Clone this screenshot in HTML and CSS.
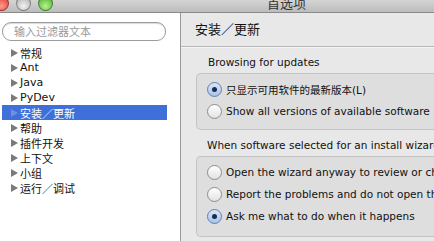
FILE: index.html
```html
<!DOCTYPE html>
<html lang="zh-CN">
<head>
    <meta charset="UTF-8">
    <title>首选项</title>
    <link rel="stylesheet" href="styles.css">
</head>
<body>
    <div class="window">
        <div class="titlebar">
            <div class="lights">
                <span class="light red"></span>
                <span class="light gray"></span>
                <span class="light green"></span>
            </div>
            <div class="title">首选项</div>
        </div>

        <div class="content">
            <div class="sidebar">
                <div class="search">输入过滤器文本</div>
                <ul class="tree">
                    <li><span class="arrow"></span>常规</li>
                    <li><span class="arrow"></span>Ant</li>
                    <li><span class="arrow"></span>Java</li>
                    <li><span class="arrow"></span>PyDev</li>
                    <li class="selected"><span class="arrow"></span>安装／更新</li>
                    <li><span class="arrow"></span>帮助</li>
                    <li><span class="arrow"></span>插件开发</li>
                    <li><span class="arrow"></span>上下文</li>
                    <li><span class="arrow"></span>小组</li>
                    <li><span class="arrow"></span>运行／调试</li>
                </ul>
            </div>

            <div class="main">
                <div class="page-header">安装／更新</div>

                <div class="group">
                    <div class="group-label">Browsing for updates</div>
                    <div class="group-box">
                        <div class="option"><span class="radio checked"></span>只显示可用软件的最新版本(L)</div>
                        <div class="option"><span class="radio"></span>Show all versions of available software</div>
                    </div>
                </div>

                <div class="group second">
                    <div class="group-label">When software selected for an install wizard may not be valid</div>
                    <div class="group-box">
                        <div class="option"><span class="radio"></span>Open the wizard anyway to review or change the selections</div>
                        <div class="option"><span class="radio"></span>Report the problems and do not open the wizard</div>
                        <div class="option"><span class="radio checked"></span>Ask me what to do when it happens</div>
                    </div>
                </div>
            </div>
        </div>
    </div>
</body>
</html>
```

FILE: styles.css
```css
body {
    margin: 0;
    font-family: "DejaVu Sans", "Noto Sans CJK SC", sans-serif;
    font-size: 10.5px;
    color: #111;
    background: #e8e8e8;
}
.window {
    width: 434px;
    height: 241px;
    overflow: hidden;
    display: flex;
    flex-direction: column;
}
.titlebar {
    height: 12px;
    flex-shrink: 0;
    display: flex;
    background: linear-gradient(#d4d4d4, #bcbcbc);
    border-bottom: 1px solid #8a8a8a;
    overflow: hidden;
}
.lights {
    display: flex;
    gap: 7px;
    margin-top: -4px;
    margin-left: -6px;
}
.light {
    width: 13px;
    height: 13px;
    border-radius: 50%;
    border: 1px solid rgba(0,0,0,0.35);
}
.red { background: radial-gradient(circle at 50% 70%, #ff9a8a, #d8322a); }
.gray { background: radial-gradient(circle at 50% 70%, #f2f2f2, #a8a8a8); }
.green { background: radial-gradient(circle at 50% 70%, #b6f28a, #43a92b); }
.title {
    margin-left: 214px;
    margin-top: -4px;
    font-family: "Noto Sans CJK SC", sans-serif;
    font-size: 13px;
    color: #333;
    line-height: 14px;
}
.content {
    flex: 1;
    display: flex;
    min-height: 0;
}
.sidebar {
    width: 180px;
    flex-shrink: 0;
    background: #fff;
    border-right: 1px solid #9a9a9a;
    padding-top: 9px;
}
.search {
    margin-left: 2px;
    width: 151px;
    height: 17px;
    border: 1px solid #9c9c9c;
    border-radius: 9px;
    padding-left: 11px;
    font-family: "Noto Sans CJK SC", sans-serif;
    font-size: 11px;
    line-height: 17px;
    color: #9a9a9a;
    box-shadow: inset 0 1px 1px rgba(0,0,0,0.15);
}
.tree {
    list-style: none;
    margin: 4px 0 0;
    padding: 0;
}
.tree li {
    display: flex;
    align-items: center;
    height: 15px;
    margin-left: 2px;
    width: 165px;
    padding-left: 9px;
    box-sizing: border-box;
    font-size: 11px;
}
.arrow {
    width: 0;
    height: 0;
    border-left: 7px solid #7a7a7a;
    border-top: 4px solid transparent;
    border-bottom: 4px solid transparent;
    margin-right: 2px;
}
.tree li.selected {
    background: #3f6fd8;
    color: #fff;
}
.tree li.selected .arrow {
    border-left-color: #6f8fe0;
}
.main {
    flex: 1;
    min-width: 0;
    background: #e8e8e8;
    padding-left: 15px;
}
.page-header {
    height: 33px;
    margin-left: -15px;
    padding-left: 14px;
    font-family: "Noto Sans CJK SC", sans-serif;
    font-size: 13px;
    line-height: 31px;
    border-bottom: 1px solid #b8b8b8;
    box-shadow: 0 1px 0 #f4f4f4;
    margin-bottom: 6px;
}
.group-label {
    white-space: nowrap;
    padding-left: 12px;
    line-height: 18px;
}
.group.second .group-label {
    padding-left: 11px;
}
.group-box {
    margin-top: 2px;
    background: #dedede;
    border: 1px solid #c4c4c4;
    border-right: none;
    border-radius: 5px 0 0 5px;
    padding: 4px 0 7px 10px;
    margin-bottom: 6px;
}
.group.second .group-box {
    padding-bottom: 9px;
}
.option {
    display: flex;
    align-items: center;
    height: 22px;
    white-space: nowrap;
}
.radio {
    width: 13px;
    height: 13px;
    border-radius: 50%;
    border: 1px solid #8e8e8e;
    background: linear-gradient(#ffffff, #e2e2e2);
    margin-right: 4px;
    display: flex;
    align-items: center;
    justify-content: center;
    flex-shrink: 0;
}
.radio.checked {
    border-color: #5d7fb8;
    background: linear-gradient(#dbe6f7, #a9c3ea);
}
.radio.checked::after {
    content: "";
    width: 5px;
    height: 5px;
    border-radius: 50%;
    background: #1c2d4a;
}
```
